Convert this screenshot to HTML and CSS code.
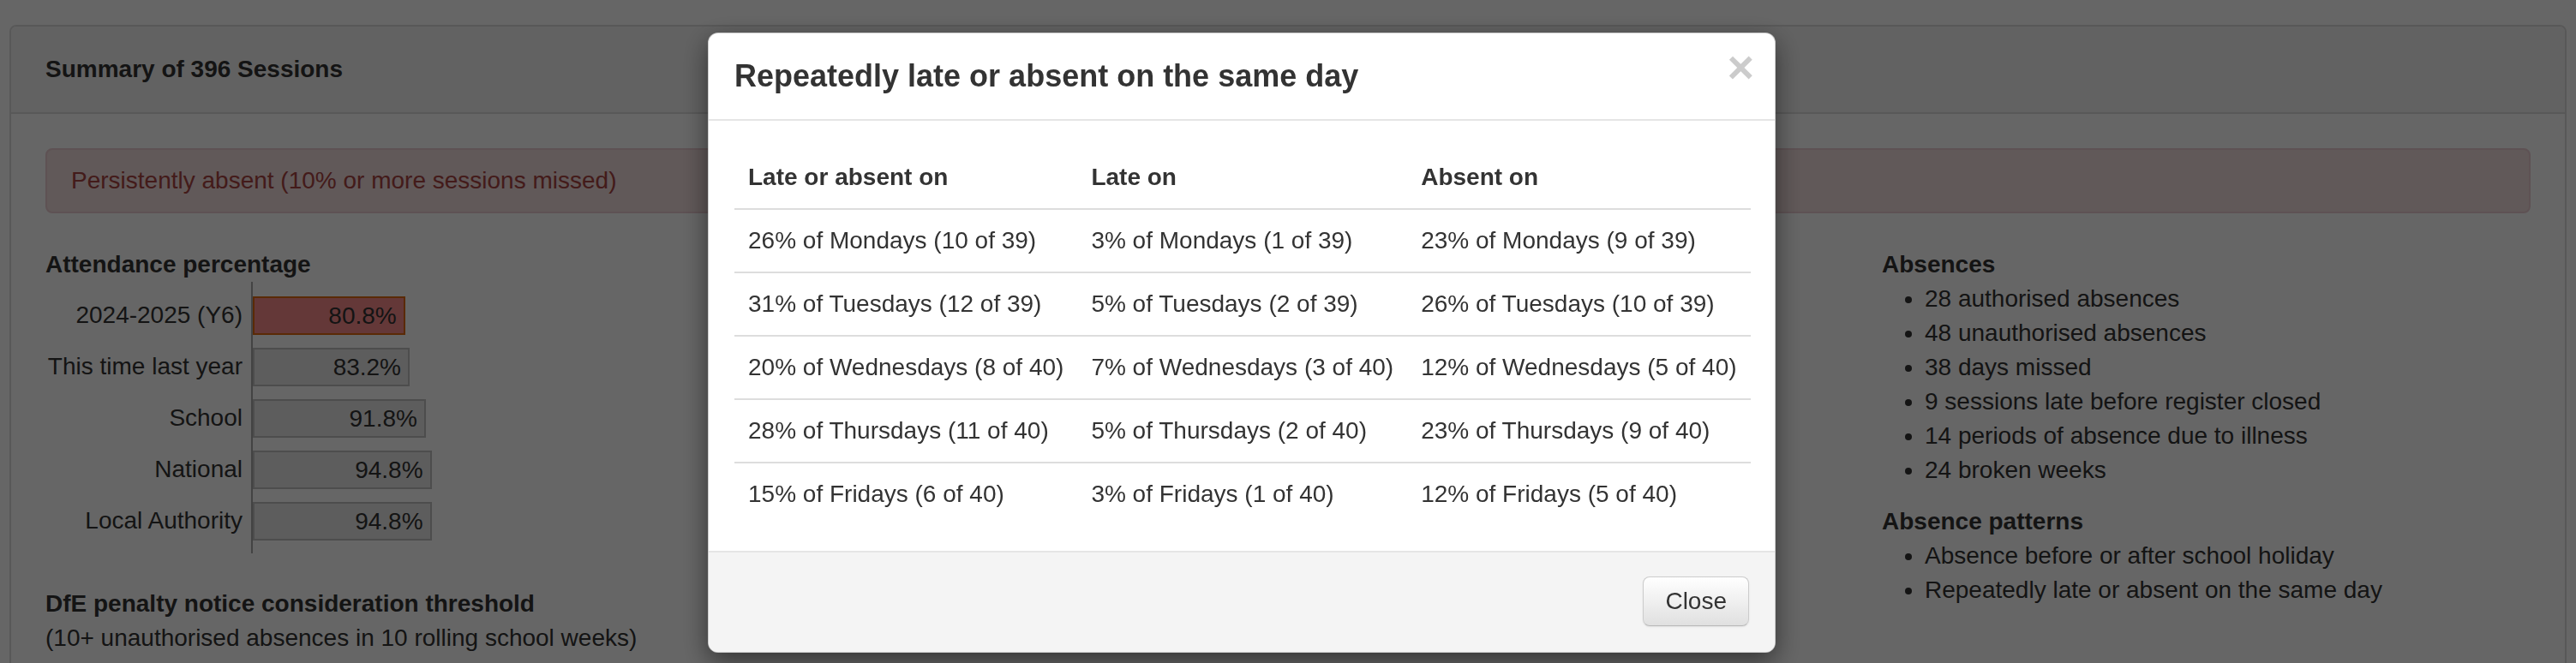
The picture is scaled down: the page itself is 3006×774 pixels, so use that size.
FILE: index.html
```html
<!DOCTYPE html>
<html lang="en">
<head>
<meta charset="utf-8">
<title>Attendance summary</title>
<link rel="stylesheet" href="styles.css">
</head>
<body>
<div class="page">
  <div class="panel">
    <div class="panel-heading">Summary of 396 Sessions</div>
    <div class="panel-body">
      <div class="alert">Persistently absent (10% or more sessions missed)</div>
      <div class="cols">
        <div class="col-left">
          <div class="sub-head">Attendance percentage</div>
          <div class="chart">
            <div class="labels">
              <div class="label">2024-2025 (Y6)</div>
              <div class="label">This time last year</div>
              <div class="label">School</div>
              <div class="label">National</div>
              <div class="label">Local Authority</div>
            </div>
            <div class="bars">
              <div class="bar-row"><div class="bar bar-current" style="width:80.8%">80.8%</div></div>
              <div class="bar-row"><div class="bar" style="width:83.2%">83.2%</div></div>
              <div class="bar-row"><div class="bar" style="width:91.8%">91.8%</div></div>
              <div class="bar-row"><div class="bar" style="width:94.8%">94.8%</div></div>
              <div class="bar-row"><div class="bar" style="width:94.8%">94.8%</div></div>
            </div>
          </div>
          <div class="sub-head threshold">DfE penalty notice consideration threshold</div>
          <div class="note">(10+ unauthorised absences in 10 rolling school weeks)</div>
        </div>
        <div class="col-right">
          <div class="sub-head">Absences</div>
          <ul class="facts">
            <li>28 authorised absences</li>
            <li>48 unauthorised absences</li>
            <li>38 days missed</li>
            <li>9 sessions late before register closed</li>
            <li>14 periods of absence due to illness</li>
            <li>24 broken weeks</li>
          </ul>
          <div class="sub-head">Absence patterns</div>
          <ul class="facts">
            <li>Absence before or after school holiday</li>
            <li>Repeatedly late or absent on the same day</li>
          </ul>
        </div>
      </div>
    </div>
  </div>
</div>

<div class="backdrop"></div>

<div class="modal">
  <div class="modal-header">
    <h4 class="modal-title">Repeatedly late or absent on the same day</h4>
    <span class="close">×</span>
  </div>
  <div class="modal-body">
    <table class="days">
      <thead>
        <tr><th>Late or absent on</th><th>Late on</th><th>Absent on</th></tr>
      </thead>
      <tbody>
        <tr><td>26% of Mondays (10 of 39)</td><td>3% of Mondays (1 of 39)</td><td>23% of Mondays (9 of 39)</td></tr>
        <tr><td>31% of Tuesdays (12 of 39)</td><td>5% of Tuesdays (2 of 39)</td><td>26% of Tuesdays (10 of 39)</td></tr>
        <tr><td>20% of Wednesdays (8 of 40)</td><td>7% of Wednesdays (3 of 40)</td><td>12% of Wednesdays (5 of 40)</td></tr>
        <tr><td>28% of Thursdays (11 of 40)</td><td>5% of Thursdays (2 of 40)</td><td>23% of Thursdays (9 of 40)</td></tr>
        <tr><td>15% of Fridays (6 of 40)</td><td>3% of Fridays (1 of 40)</td><td>12% of Fridays (5 of 40)</td></tr>
      </tbody>
    </table>
  </div>
  <div class="modal-footer">
    <button class="btn" type="button">Close</button>
  </div>
</div>
</body>
</html>
```

FILE: styles.css
```css
* { box-sizing: border-box; }

html, body {
  margin: 0;
  height: 100%;
  overflow: hidden;
}

body {
  font-family: "Liberation Sans", Arial, Helvetica, sans-serif;
  font-size: 28px;
  line-height: 40px;
  color: #333;
  background: #fff;
}

.page {
  padding: 29px 11px 0;
}

.panel {
  border: 2px solid #ddd;
  border-radius: 8px;
  background: #fff;
}

.panel-heading {
  padding: 30px 40px;
  background: #f5f5f5;
  border-bottom: 2px solid #ddd;
  border-radius: 6px 6px 0 0;
  font-weight: bold;
}

.panel-body {
  padding: 40px;
}

.alert {
  padding: 16px 28px;
  margin-bottom: 40px;
  border: 2px solid #ebccd1;
  border-radius: 8px;
  background: #f2dede;
  color: #a94442;
}

.cols {
  display: grid;
  grid-template-columns: 1fr 757px;
}

.sub-head {
  font-weight: bold;
}

.chart {
  display: flex;
}

.labels {
  width: 240px;
  padding: 9px 0 8px;
}

.label {
  height: 60px;
  line-height: 60px;
  text-align: right;
  padding-right: 10px;
  white-space: nowrap;
}

.bars {
  width: 222px;
  padding: 9px 0 8px;
  border-left: 2px solid #a8a8a8;
}

.bar-row {
  height: 60px;
  display: flex;
  align-items: center;
}

.bar {
  height: 45px;
  line-height: 41px;
  border: 2px solid #c0c0c0;
  background: #e9e9e9;
  text-align: right;
  padding-right: 8px;
  white-space: nowrap;
}

.bar-current {
  background: #f98c8c;
  border-color: #e06a10;
}

.threshold {
  margin-top: 39px;
}

.facts {
  margin: 0 0 20px;
  padding-left: 50px;
}

.backdrop {
  position: fixed;
  inset: 0;
  background: rgba(0, 0, 0, 0.6);
}

.modal {
  position: fixed;
  top: 38px;
  left: 826px;
  width: 1246px;
  background: #fff;
  border: 1px solid rgba(0, 0, 0, 0.2);
  border-radius: 12px;
  box-shadow: 0 10px 30px rgba(0, 0, 0, 0.5);
  overflow: hidden;
}

.modal-header {
  display: flex;
  justify-content: space-between;
  align-items: flex-start;
  padding: 30px;
  border-bottom: 2px solid #e5e5e5;
}

.modal-title {
  margin: 0;
  font-size: 36px;
  line-height: 39.6px;
  font-weight: bold;
  color: #333;
}

.close {
  font-size: 54px;
  line-height: 1;
  font-weight: bold;
  color: #000;
  opacity: 0.2;
  margin-top: -18px;
  margin-right: -6px;
}

.modal-body {
  padding: 30px;
}

.days {
  width: 100%;
  border-collapse: collapse;
}

.days th,
.days td {
  padding: 16px;
  text-align: left;
  vertical-align: top;
  white-space: nowrap;
}

.days th {
  border-bottom: 2px solid #ddd;
}

.days tbody tr + tr td {
  border-top: 2px solid #ddd;
}

.modal-footer {
  padding: 28px 30px 30px;
  border-top: 2px solid #e5e5e5;
  background: #f4f4f4;
  text-align: right;
}

.btn {
  font-family: inherit;
  font-size: 28px;
  line-height: 40px;
  color: #333;
  padding: 8px 25px;
  border: 1px solid #ccc;
  border-bottom-color: #b8b8b8;
  border-radius: 8px;
  background: linear-gradient(#fff, #e0e0e0);
  box-shadow: 0 1px 2px rgba(0, 0, 0, 0.08);
}
```
